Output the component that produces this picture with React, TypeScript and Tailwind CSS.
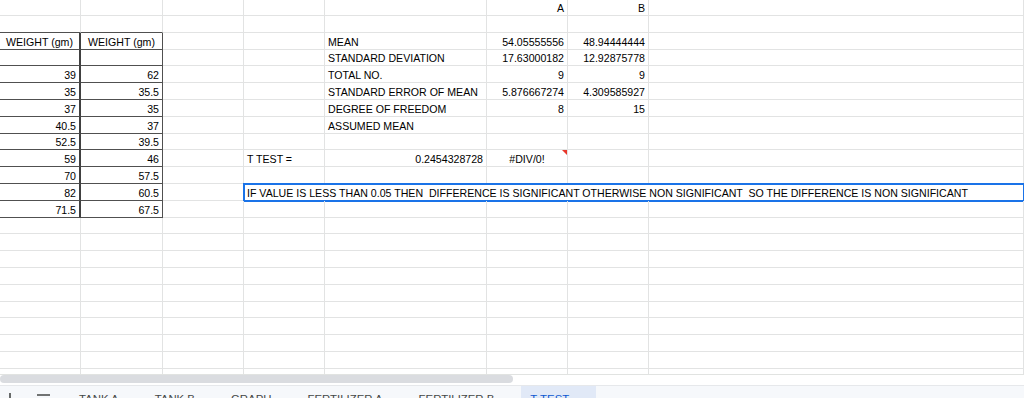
import React from "react"

type Cell = { t: string; a?: "l" | "r" | "c"; err?: boolean }

const colW = ["w-[81px]", "w-[82px]", "w-[81px]", "w-[81px]", "w-[162px]", "w-[81px]", "w-[81px]", "flex-1"]

const r = (t: string): Cell => ({ t, a: "r" })
const l = (t: string): Cell => ({ t, a: "l" })
const c = (t: string): Cell => ({ t, a: "c" })

// sparse sheet contents: row -> col -> cell
const sheet: Record<number, Record<number, Cell>> = {
  0: { 5: r("A"), 6: r("B") },
  2: { 0: c("WEIGHT (gm)"), 1: c("WEIGHT (gm)"), 4: l("MEAN"), 5: r("54.05555556"), 6: r("48.94444444") },
  3: { 4: l("STANDARD DEVIATION"), 5: r("17.63000182"), 6: r("12.92875778") },
  4: { 0: r("39"), 1: r("62"), 4: l("TOTAL NO."), 5: r("9"), 6: r("9") },
  5: { 0: r("35"), 1: r("35.5"), 4: l("STANDARD ERROR OF MEAN"), 5: r("5.876667274"), 6: r("4.309585927") },
  6: { 0: r("37"), 1: r("35"), 4: l("DEGREE OF FREEDOM"), 5: r("8"), 6: r("15") },
  7: { 0: r("40.5"), 1: r("37"), 4: l("ASSUMED MEAN") },
  8: { 0: r("52.5"), 1: r("39.5") },
  9: { 0: r("59"), 1: r("46"), 3: l("T TEST ="), 4: r("0.2454328728"), 5: { t: "#DIV/0!", a: "c", err: true } },
  10: { 0: r("70"), 1: r("57.5") },
  11: { 0: r("82"), 1: r("60.5") },
  12: { 0: r("71.5"), 1: r("67.5") },
}

const note =
  "IF VALUE IS LESS THAN 0.05 THEN  DIFFERENCE IS SIGNIFICANT OTHERWISE NON SIGNIFICANT  SO THE DIFFERENCE IS NON SIGNIFICANT"

function borders(row: number, col: number) {
  const inTable = col <= 1
  const bottom = inTable && row >= 1 && row <= 12 ? "border-b-[#505050]" : "border-b-[#e2e3e3]"
  let right = "border-r border-r-[#e2e3e3]"
  if (inTable && row >= 2 && row <= 12) {
    right = col === 0 ? "border-r-2 border-r-[#404040]" : "border-r border-r-[#505050]"
  }
  return `border-b ${bottom} ${right}`
}

function GridCell({ row, col, cell }: { row: number; col: number; cell?: Cell }) {
  const align = cell?.a === "r" ? "justify-end" : cell?.a === "c" ? "justify-center" : "justify-start"
  return (
    <div
      className={`relative flex h-full shrink-0 items-end overflow-hidden whitespace-nowrap px-[3px] ${colW[col]} ${align} ${borders(row, col)}`}
    >
      {cell && <span className="leading-[13px]">{cell.t}</span>}
      {cell?.err && (
        <div className="absolute right-0 top-0 h-0 w-0 border-l-[5px] border-t-[5px] border-l-transparent border-t-[#e8372b]" />
      )}
    </div>
  )
}

function SheetRow({ row }: { row: number }) {
  const h = row === 0 ? "h-[16px]" : "h-[16.8px]"
  if (row === 11) {
    return (
      <div className={`flex ${h}`}>
        {[0, 1, 2].map((col) => (
          <GridCell key={col} row={row} col={col} cell={sheet[row]?.[col]} />
        ))}
        <div className="relative flex h-full flex-1 items-end whitespace-pre border-b border-b-[#e2e3e3] px-[3px] outline-2 -outline-offset-1 outline-[#1a73e8]">
          <span className="leading-[13px]">{note}</span>
        </div>
      </div>
    )
  }
  return (
    <div className={`flex ${h}`}>
      {colW.map((_, col) => (
        <GridCell key={col} row={row} col={col} cell={sheet[row]?.[col]} />
      ))}
    </div>
  )
}

const tabs = ["TANK A", "TANK B", "GRAPH", "FERTILIZER A", "FERTILIZER B", "T TEST"]

export default function App() {
  return (
    <div className="flex h-[398px] w-[1024px] flex-col overflow-hidden bg-white font-['Liberation_Sans',Arial,sans-serif] text-[10.6px] text-black">
      {/* cells */}
      <div className="h-[374px] shrink-0 overflow-hidden">
        {Array.from({ length: 23 }, (_, i) => (
          <SheetRow key={i} row={i} />
        ))}
      </div>

      {/* horizontal scrollbar */}
      <div className="h-[11px] shrink-0 border-t border-[#e1e3e1] bg-white">
        <div className="h-[8px] w-[513px] rounded-full bg-[#dadce0]" />
      </div>

      {/* sheet tabs */}
      <div className="flex h-[40px] shrink-0 border-t border-[#e6e8eb] bg-[#f6f8fb] text-[11.4px] font-medium leading-[16px] text-[#444746]">
        <div className="w-[26px] shrink-0 pl-[3px] pt-[6px]">
          <svg width="14" height="14" viewBox="0 0 14 14" stroke="#444746" strokeWidth="1.6">
            <line x1="7" y1="1" x2="7" y2="13" />
            <line x1="1" y1="7" x2="13" y2="7" />
          </svg>
        </div>
        <div className="w-[44px] shrink-0 pl-[11px] pt-[8px]">
          <svg width="13" height="12" viewBox="0 0 13 12" stroke="#444746" strokeWidth="1.5">
            <line x1="0" y1="1" x2="13" y2="1" />
            <line x1="0" y1="5.5" x2="13" y2="5.5" />
            <line x1="0" y1="10" x2="13" y2="10" />
          </svg>
        </div>
        {tabs.map((t) => (
          <div
            key={t}
            className={`h-full pl-[9px] pr-[27px] pt-[5px] ${t === "T TEST" ? "bg-[#e1e9f7] text-[#0b57d0]" : ""}`}
          >
            {t}
          </div>
        ))}
      </div>
    </div>
  )
}
